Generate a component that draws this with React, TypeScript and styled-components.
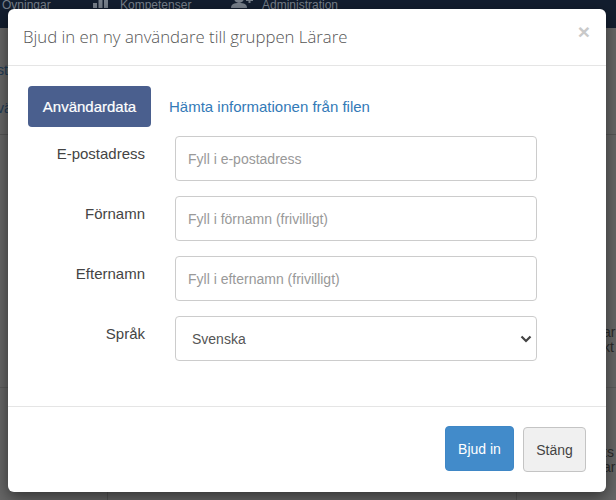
import styled, { createGlobalStyle } from "styled-components";

const GlobalStyle = createGlobalStyle`
  html, body {
    margin: 0;
    padding: 0;
    height: 100%;
    overflow: hidden;
    font-family: "Liberation Sans", Arial, sans-serif;
  }
`;

const Page = styled.div`
  position: relative;
  width: 616px;
  height: 500px;
  overflow: hidden;
  background: #666666;
`;

const TopNav = styled.div`
  display: flex;
  height: 28px;
  overflow: hidden;
  background: #131e2f;
  color: #78808b;
  font-size: 12px;
  line-height: 12px;
`;

const NavItem = styled.div<{ $width: number; $gap?: number }>`
  display: flex;
  align-items: flex-start;
  gap: ${(p) => p.$gap ?? 12}px;
  width: ${(p) => p.$width}px;
  padding-left: 2px;
  box-sizing: border-box;
  margin-top: -1px;
`;

const NavIcon = styled.svg`
  flex: none;
  margin-top: -3px;
`;

const TopSection = styled.div`
  height: 107px;
  box-sizing: border-box;
  padding-top: 34px;
  border-bottom: 1px solid #555;
  color: #1f3b57;
  font-size: 14px;
  line-height: 16px;
  text-indent: -3px;
  p {
    margin: 0 0 22px;
  }
`;

const MiddleSection = styled.div`
  display: flex;
  justify-content: flex-end;
  height: 253px;
  box-sizing: border-box;
  padding-top: 190px;
  border-bottom: 1px solid #5a5a5a;
`;

const BottomSection = styled.div`
  display: grid;
  grid-template-columns: 108px 409px 99px;
  height: 112px;
`;

const Cell = styled.div`
  border-right: 1px solid #555;
  &:last-child {
    display: flex;
    justify-content: flex-end;
    border-right: none;
    padding-top: 57px;
  }
`;

const EdgeText = styled.div`
  width: 13px;
  white-space: nowrap;
  color: #2b2b2b;
  font-size: 14px;
  line-height: 15px;
`;

const Modal = styled.div`
  position: absolute;
  left: 8px;
  top: 9px;
  width: 598px;
  height: 483px;
  display: flex;
  flex-direction: column;
  background: #fff;
  border-radius: 6px;
  box-shadow: 0 5px 15px rgba(0, 0, 0, 0.5);
`;

const Header = styled.div`
  display: flex;
  justify-content: space-between;
  height: 56px;
  padding: 0 16px 0 15px;
  border-bottom: 1px solid #e5e5e5;
`;

const Title = styled.h4`
  margin: 0;
  padding-top: 17px;
  font-family: "Open Sans", sans-serif;
  font-size: 16.75px;
  font-weight: 300;
  line-height: 22px;
  color: #555;
`;

const Close = styled.span`
  padding-top: 11px;
  font-size: 21px;
  font-weight: 700;
  line-height: 24px;
  color: #c9c9c9;
`;

const Body = styled.div`
  flex: 1;
  padding: 20px 20px 0;
`;

const Tabs = styled.div`
  display: flex;
  align-items: center;
  gap: 18px;
  height: 41px;
  margin-bottom: 9px;
`;

const ActiveTab = styled.span`
  display: flex;
  align-items: center;
  justify-content: center;
  width: 123px;
  height: 41px;
  border-radius: 4px;
  background: #4a5f8e;
  color: #fff;
  font-size: 15px;
  -webkit-text-stroke: 0.2px #fff;
`;

const TabLink = styled.a`
  color: #337ab7;
  font-size: 15px;
`;

const Form = styled.div`
  display: flex;
  flex-direction: column;
  gap: 15px;
`;

const Row = styled.div`
  display: grid;
  grid-template-columns: 117px 362px;
  column-gap: 30px;
`;

const Label = styled.label`
  padding-top: 9px;
  text-align: right;
  font-size: 15px;
  line-height: 18px;
  color: #444;
`;

const Input = styled.input`
  width: 100%;
  height: 45px;
  box-sizing: border-box;
  padding: 0 12px;
  border: 1px solid #ccc;
  border-radius: 4px;
  font-family: inherit;
  font-size: 14px;
  color: #555;
  outline: none;
  &::placeholder {
    color: #999;
    opacity: 1;
  }
`;

const SelectBox = styled.div`
  display: flex;
  align-items: center;
  justify-content: space-between;
  height: 45px;
  box-sizing: border-box;
  padding: 1px 3px 0 16px;
  border: 1px solid #ccc;
  border-radius: 4px;
  font-size: 14px;
  color: #555;
`;

const Footer = styled.div`
  display: flex;
  align-items: flex-start;
  justify-content: flex-end;
  gap: 9px;
  height: 86px;
  box-sizing: border-box;
  padding: 19px 20px 0 0;
  border-top: 1px solid #e5e5e5;
`;

const Button = styled.button<{ $primary?: boolean }>`
  height: 45px;
  width: ${(p) => (p.$primary ? 69 : 63)}px;
  margin-top: ${(p) => (p.$primary ? 0 : 1)}px;
  padding: 0;
  border: 1px solid ${(p) => (p.$primary ? "#3f87c6" : "#c4c4c4")};
  border-radius: 4px;
  background: ${(p) => (p.$primary ? "#428bca" : "#f0f0f0")};
  color: ${(p) => (p.$primary ? "#fff" : "#444")};
  font-family: inherit;
  font-size: 14px;
`;

function BarsIcon() {
  return (
    <NavIcon width="15" height="12" viewBox="0 0 15 12" fill="currentColor">
      <rect x="0" y="7" width="4" height="5" />
      <rect x="5.500" y="3" width="4" height="9" />
      <rect x="11" y="0" width="4" height="12" />
    </NavIcon>
  );
}

function UserPlusIcon() {
  return (
    <NavIcon width="22" height="12" viewBox="0 0 22 12" fill="currentColor">
      <circle cx="8" cy="2" r="5" />
      <path d="M0 12c0-4 3-5 8-5s8 1 8 5z" />
      <path d="M15 3h2.500V1h2v2H22v2h-2.500v2h-2V5H15z" />
    </NavIcon>
  );
}

function Chevron() {
  return (
    <svg width="14" height="10" viewBox="0 0 14 10">
      <path d="M2.500 2.500 7 7l4.500-4.500" fill="none" stroke="#444" strokeWidth="2.200" />
    </svg>
  );
}

export default function App() {
  return (
    <Page>
      <GlobalStyle />
      <TopNav>
        <NavItem $width={91}>Övningar</NavItem>
        <NavItem $width={138}>
          <BarsIcon />
          Kompetenser
        </NavItem>
        <NavItem $width={140} $gap={9}>
          <UserPlusIcon />
          Administration
        </NavItem>
      </TopNav>
      <TopSection>
        <p>st</p>
        <p>vä</p>
      </TopSection>
      <MiddleSection>
        <EdgeText>
          ar
          <br />
          kt
        </EdgeText>
      </MiddleSection>
      <BottomSection>
        <Cell />
        <Cell />
        <Cell>
          <EdgeText>
            ts
            <br />
            ar
          </EdgeText>
        </Cell>
      </BottomSection>
      <Modal>
        <Header>
          <Title>Bjud in en ny användare till gruppen Lärare</Title>
          <Close>×</Close>
        </Header>
        <Body>
          <Tabs>
            <ActiveTab>Användardata</ActiveTab>
            <TabLink>Hämta informationen från filen</TabLink>
          </Tabs>
          <Form>
            <Row>
              <Label>E-postadress</Label>
              <Input placeholder="Fyll i e-postadress" />
            </Row>
            <Row>
              <Label>Förnamn</Label>
              <Input placeholder="Fyll i förnamn (frivilligt)" />
            </Row>
            <Row>
              <Label>Efternamn</Label>
              <Input placeholder="Fyll i efternamn (frivilligt)" />
            </Row>
            <Row>
              <Label>Språk</Label>
              <SelectBox>
                Svenska
                <Chevron />
              </SelectBox>
            </Row>
          </Form>
        </Body>
        <Footer>
          <Button $primary>Bjud in</Button>
          <Button>Stäng</Button>
        </Footer>
      </Modal>
    </Page>
  );
}
